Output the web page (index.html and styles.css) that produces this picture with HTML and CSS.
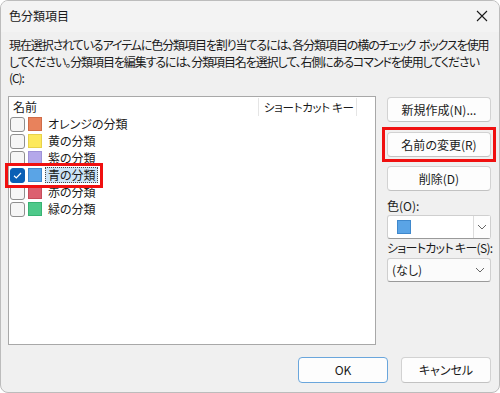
FILE: index.html
```html
<!DOCTYPE html>
<html lang="ja">
<head>
<meta charset="utf-8">
<link rel="stylesheet" href="styles.css">
</head>
<body>
<div class="window">
  <div class="titlebar">
    <span class="title">色分類項目</span>
    <svg class="close" width="12" height="12" viewBox="0 0 12 12"><path d="M1 1L11 11M11 1L1 11" stroke="#1a1a1a" stroke-width="1.1" fill="none"/></svg>
  </div>
  <p class="desc">現在選択されているアイテムに色分類項目を割り当てるには、各分類項目の横のチェック&nbsp;ボックスを使用<br>してください。分類項目を編集するには、分類項目名を選択して、右側にあるコマンドを使用してください<br>(C):</p>
  <div class="main">
    <div class="listbox">
      <div class="header">
        <span class="col-name">名前</span>
        <span class="col-key">ショートカット キー</span>
        <span class="col-rest"></span>
      </div>
      <div class="rows">
        <div class="row"><span class="check"></span><span class="swatch orange"></span><span class="label">オレンジの分類</span></div>
        <div class="row"><span class="check"></span><span class="swatch yellow"></span><span class="label">黄の分類</span></div>
        <div class="row"><span class="check"></span><span class="swatch purple"></span><span class="label">紫の分類</span></div>
        <div class="row marked"><span class="check on"><svg width="11" height="11" viewBox="0 0 11 11"><path d="M2 5.8L4.3 8L9 3" stroke="#fff" stroke-width="1.2" fill="none"/></svg></span><span class="swatch blue"></span><span class="label selected">青の分類</span></div>
        <div class="row"><span class="check"></span><span class="swatch red"></span><span class="label">赤の分類</span></div>
        <div class="row"><span class="check"></span><span class="swatch green"></span><span class="label">緑の分類</span></div>
      </div>
    </div>
    <div class="side">
      <button class="btn">新規作成(N)...</button>
      <div class="marked-btn"><button class="btn">名前の変更(R)</button></div>
      <button class="btn">削除(D)</button>
      <label class="field-label">色(O):</label>
      <div class="combo color-combo">
        <span class="combo-value"><span class="swatch blue"></span></span>
        <span class="drop"><svg width="10" height="6" viewBox="0 0 10 6"><path d="M1 1L5 5L9 1" stroke="#666" stroke-width="1" fill="none"/></svg></span>
      </div>
      <label class="field-label second">ショートカット キー(S):</label>
      <div class="combo key-combo">
        <span class="combo-value">(なし)</span>
        <span class="drop plain"><svg width="10" height="6" viewBox="0 0 10 6"><path d="M1 1L5 5L9 1" stroke="#666" stroke-width="1" fill="none"/></svg></span>
      </div>
    </div>
  </div>
  <div class="footer">
    <button class="btn default">OK</button>
    <button class="btn">キャンセル</button>
  </div>
</div>
</body>
</html>
```
FILE: styles.css
```css
* { box-sizing: border-box; }
html, body { margin: 0; padding: 0; background: #ffffff; }
body {
  font-family: "Noto Sans CJK JP", sans-serif;
  font-feature-settings: "palt";
  font-size: 12px;
  color: #1a1a1a;
}
.window {
  width: 500px;
  height: 393px;
  border: 1px solid #bcbcbc;
  border-radius: 8px;
  background: #f0f0f0;
  display: flex;
  flex-direction: column;
  overflow: hidden;
}
.titlebar {
  height: 31px;
  display: flex;
  align-items: center;
  justify-content: space-between;
  padding: 0 11px 2px 8px;
  background: #f3f3f3;
}
.title { font-size: 12px; }
.close { display: block; }
.desc {
  margin: 5px 0 0 0;
  padding: 0 8px;
  line-height: 16.5px;
  white-space: nowrap;
  letter-spacing: -1.1px;
  word-spacing: 2px;
}
.main {
  display: flex;
  margin-top: 9px;
  padding-left: 7px;
  gap: 11px;
}
.listbox {
  width: 368px;
  height: 249px;
  background: #fff;
  border: 1px solid #a8a8a8;
  padding-top: 1px;
}
.header {
  display: flex;
  height: 18px;
  align-items: stretch;
}
.col-name { width: 250px; padding-left: 4px; line-height: 18px; border-right: 1px solid #e5e5e5; }
.col-key { width: 98px; padding-left: 5px; line-height: 18px; font-size: 11.5px; letter-spacing: -0.3px; white-space: nowrap; border-right: 1px solid #e5e5e5; }
.col-rest { flex: 1; }
.rows { padding-left: 1px; }
.row {
  display: flex;
  align-items: center;
  height: 17px;
  gap: 3px;
  width: fit-content;
}
.check {
  width: 15px;
  height: 15px;
  border: 1px solid #8f8f8f;
  border-radius: 3px;
  background: #f6f6f6;
  display: flex;
  align-items: center;
  justify-content: center;
}
.check.on { background: #0a5fb5; border-color: #0a5fb5; }
.check svg { display: block; }
.swatch {
  width: 14px;
  height: 14px;
  display: inline-block;
}
.orange { background: #e8825c; border: 1px solid #d06c48; }
.yellow { background: #fde95c; border: 1px solid #e8d24a; }
.purple { background: #b4a8ea; border: 1px solid #9f92d8; }
.blue { background: #5aa4e6; border: 1px solid #3f88cc; }
.red { background: #dc6070; border: 1px solid #c64c5b; }
.green { background: #4ec98a; border: 1px solid #38b373; }
.label { padding: 0 2px 0 3px; line-height: 16px; }
.label.selected {
  background: #cce4f7;
  outline: 1px dotted #4a4a4a;
  outline-offset: -1px;
}
.row.marked {
  outline: 3px solid #f01010;
  outline-offset: 1px;
  margin-left: -1px;
  padding-left: 1px;
  padding-right: 1px;
  height: 17px;
}
.side {
  width: 104px;
  display: flex;
  flex-direction: column;
  padding-top: 1px;
}
.btn {
  font-family: inherit;
  font-feature-settings: "palt";
  font-size: 12px;
  color: #1a1a1a;
  height: 25px;
  width: 104px;
  border: 1px solid #d2d2d2;
  border-bottom-color: #c2c2c2;
  border-radius: 4px;
  background: #fdfdfd;
  padding: 0;
}
.side > .btn:first-child { margin-bottom: 10px; }
.marked-btn {
  outline: 3px solid #f01010;
  outline-offset: 2px;
  margin: 0 0 9px 0;
  width: 104px;
}
.marked-btn .btn { display: block; }
.field-label {
  margin-top: 6px;
  height: 18px;
  line-height: 18px;
  white-space: nowrap;
}
.field-label.second {
  margin-top: 0;
  height: 18px;
  line-height: 14px;
  padding-top: 1px;
  letter-spacing: -0.7px;
}
.combo {
  height: 24px;
  width: 104px;
  display: flex;
  align-items: stretch;
  border: 1px solid #cfcfcf;
  border-bottom-color: #9a9a9a;
  border-radius: 3px;
  margin-bottom: 1px;
}
.color-combo { background: #fff; }
.key-combo { background: #fbfbfb; margin-top: 0; }
.combo-value {
  flex: 1;
  display: flex;
  align-items: center;
  padding-left: 9px;
}
.key-combo .combo-value { padding-left: 4px; }
.color-combo .swatch { width: 14px; height: 14px; }
.drop {
  width: 17px;
  display: flex;
  align-items: center;
  justify-content: center;
  border-left: 1px solid #dcdcdc;
  background: #fdfdfd;
}
.drop.plain { border-left: none; background: transparent; width: 20px; }
.footer {
  display: flex;
  justify-content: flex-end;
  gap: 13px;
  padding-right: 8px;
  margin-top: 12px;
}
.footer .btn { width: 90px; height: 26px; }
.btn.default { border: 1px solid #6aa6dc; background: #fdfdfd; }
```
